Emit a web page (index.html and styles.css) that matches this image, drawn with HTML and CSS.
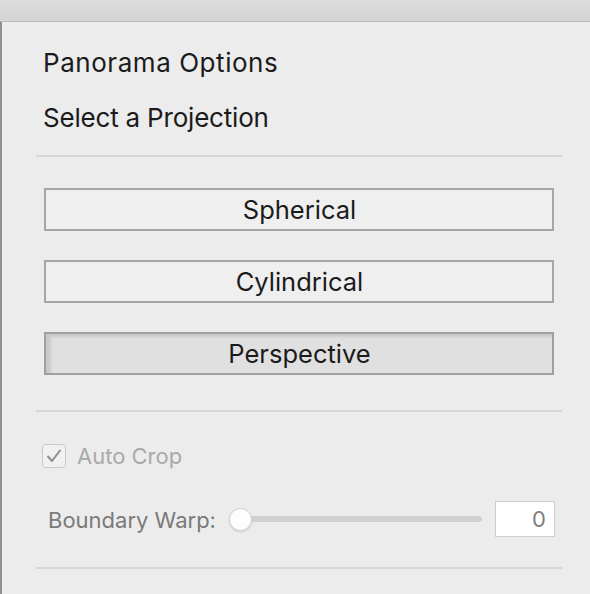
FILE: index.html
```html
<!DOCTYPE html>
<html lang="en">
<head>
    <meta charset="UTF-8">
    <meta name="viewport" content="width=device-width, initial-scale=1.0">
    <title>Panorama Options</title>
    <link rel="stylesheet" href="styles.css">
</head>
<body>
    <div class="titlebar"></div>
    <div class="panel">
        <div class="head">
            <div class="title">Panorama Options</div>
            <div class="subtitle">Select a Projection</div>
        </div>

        <div class="projections">
            <button class="proj">Spherical</button>
            <button class="proj">Cylindrical</button>
            <button class="proj active">Perspective</button>
        </div>

        <div class="options">
            <label class="check">
                <span class="box">
                    <svg width="16" height="14" viewBox="0 0 16 14">
                        <polyline points="2,7.5 6,12 14,1.5" fill="none" stroke="#8e8e8e" stroke-width="2" stroke-linecap="round" stroke-linejoin="round"/>
                    </svg>
                </span>
                <span class="check-label">Auto Crop</span>
            </label>

            <div class="warp">
                <span class="warp-label">Boundary Warp:</span>
                <div class="slider">
                    <div class="track"></div>
                    <div class="thumb"></div>
                </div>
                <div class="value">0</div>
            </div>
        </div>
    </div>
</body>
</html>
```

FILE: styles.css
```css
body {
    margin: 0;
    padding: 0;
    background-color: #ececec;
    font-family: "Inter", "Liberation Sans", sans-serif;
    color: #1b1b1b;
    width: 590px;
    height: 594px;
    overflow: hidden;
}

.titlebar {
    height: 21px;
    background: linear-gradient(#dcdcdc, #d4d4d4);
    border-bottom: 1px solid #b9b9b9;
}

.panel {
    border-left: 2px solid #8f8f8f;
    height: 572px;
    padding: 0 28px 0 34px;
}

.head {
    padding: 25px 0 21px 7px;
    border-bottom: 2px solid #d6d6d6;
}

.title,
.subtitle {
    font-size: 26px;
    line-height: 32px;
}

.title {
    letter-spacing: 0.55px;
}

.subtitle {
    margin-top: 23px;
    letter-spacing: -0.2px;
}

.projections {
    display: flex;
    flex-direction: column;
    gap: 29px;
    padding: 31px 8px 35px 8px;
    border-bottom: 2px solid #d6d6d6;
}

.proj {
    height: 43px;
    margin: 0;
    padding: 0 0 0 1px;
    background-color: #efefef;
    border: 2px solid #a6a6a6;
    border-radius: 0;
    font-family: inherit;
    font-size: 25.5px;
    color: #1b1b1b;
    line-height: 39px;
}

.proj.active {
    background-color: #e0e0e0;
    border-color: #a0a0a0;
    box-shadow: inset 5px 3px 3px rgba(0, 0, 0, 0.1);
}

.options {
    padding: 31px 0 30px 0;
    border-bottom: 2px solid #d6d6d6;
}

.check {
    display: flex;
    align-items: center;
    gap: 11px;
    margin-left: 6px;
}

.box {
    width: 22px;
    height: 22px;
    border: 1px solid #c8c8c8;
    border-radius: 4px;
    background-color: #f1f1f1;
    display: flex;
    align-items: center;
    justify-content: center;
}

.check-label {
    font-size: 22px;
    color: #a9a9a9;
}

.warp {
    display: flex;
    align-items: center;
    height: 36px;
    margin-top: 32px;
    padding: 0 7px 0 12px;
}

.warp-label {
    font-size: 22px;
    color: #7a7a7a;
    margin-top: 2px;
}

.slider {
    position: relative;
    flex: 1;
    height: 22px;
    margin-left: 13px;
    margin-right: 13px;
}

.track {
    position: absolute;
    left: 8px;
    right: 0;
    top: 8px;
    height: 6px;
    border-radius: 3px;
    background-color: #d0d0d0;
}

.thumb {
    position: absolute;
    left: 0;
    top: 0;
    width: 21px;
    height: 21px;
    border-radius: 50%;
    background-color: #fdfdfd;
    border: 1px solid #d2d2d2;
    box-shadow: 0 1px 2px rgba(0, 0, 0, 0.12);
}

.value {
    width: 50px;
    height: 34px;
    border: 1px solid #cdcdcd;
    background-color: #fff;
    padding-right: 8px;
    text-align: right;
    font-size: 22px;
    line-height: 34px;
    color: #808080;
}
```
